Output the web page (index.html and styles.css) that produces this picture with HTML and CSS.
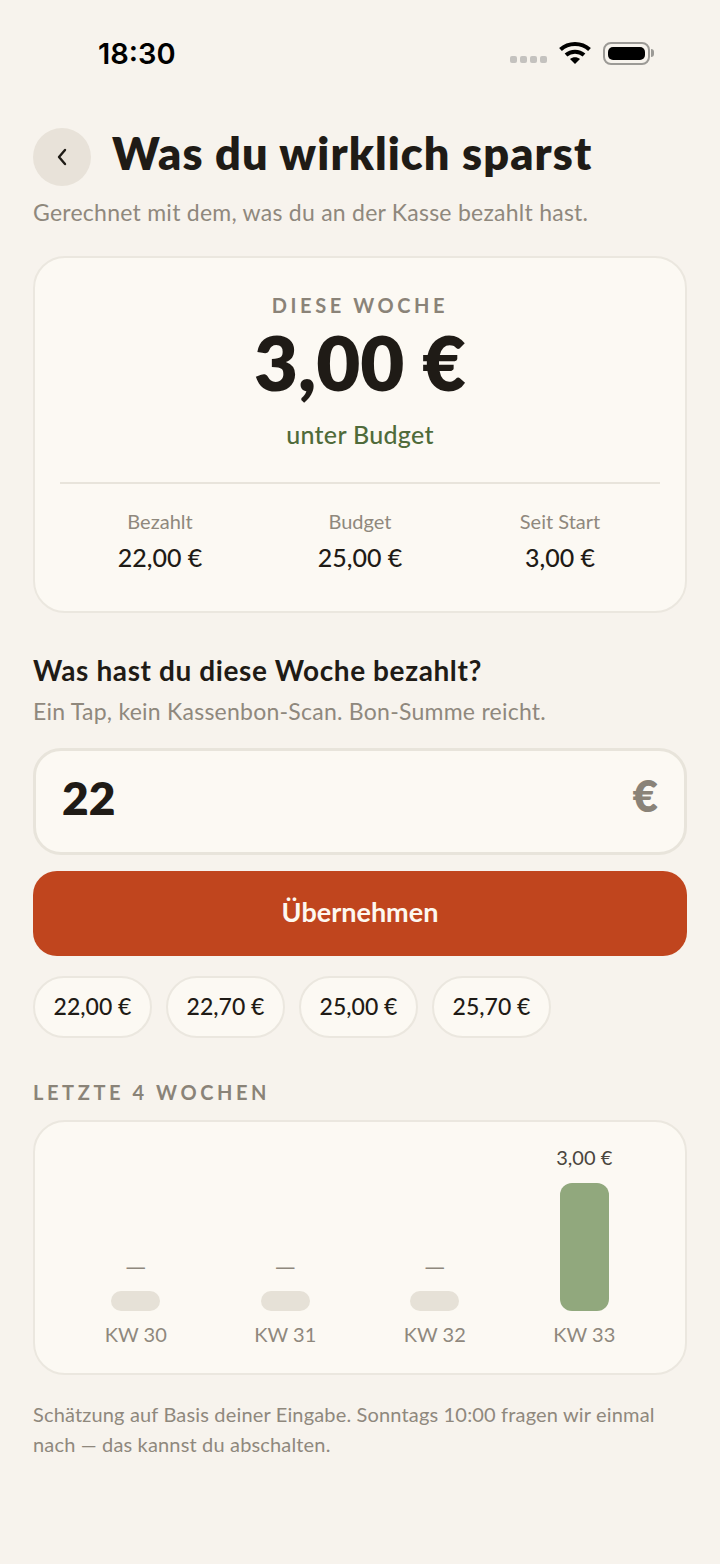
FILE: index.html
```html
<!DOCTYPE html>
<html lang="de">
<head>
    <meta charset="UTF-8">
    <meta name="viewport" content="width=device-width, initial-scale=1.0">
    <title>Was du wirklich sparst</title>
    <link rel="stylesheet" href="styles.css">
</head>
<body>
    <div class="statusbar">
        <span class="uhrzeit">18:30</span>
        <div class="status-icons">
            <div class="signal"><i></i><i></i><i></i><i></i></div>
            <svg class="wifi" width="32" height="24" viewBox="0 0 32 24">
                <path d="M1.5 8.5 C9.5 1 22.5 1 30.5 8.5" fill="none" stroke="#000" stroke-width="4"/>
                <path d="M7 14 C12 9.5 20 9.5 25 14" fill="none" stroke="#000" stroke-width="4"/>
                <path d="M11 18 C14 15.5 18 15.5 21 18 L16 23 Z" fill="#000"/>
            </svg>
            <div class="batterie"><div class="batterie-fill"></div></div>
            <div class="batterie-pol"></div>
        </div>
    </div>

    <main class="seite">
        <div class="kopf">
            <button class="zurueck">
                <svg width="12" height="20" viewBox="0 0 12 20"><path d="M9 3 L3 10 L9 17" fill="none" stroke="#1f1b16" stroke-width="2.4" stroke-linecap="round" stroke-linejoin="round"/></svg>
            </button>
            <h1>Was du wirklich sparst</h1>
        </div>
        <p class="untertitel">Gerechnet mit dem, was du an der Kasse bezahlt hast.</p>

        <section class="karte ergebnis">
            <div class="label">DIESE WOCHE</div>
            <div class="betrag">3,00 €</div>
            <div class="status-text">unter Budget</div>
            <div class="werte">
                <div class="wert"><span>Bezahlt</span><strong>22,00 €</strong></div>
                <div class="wert"><span>Budget</span><strong>25,00 €</strong></div>
                <div class="wert"><span>Seit Start</span><strong>3,00 €</strong></div>
            </div>
        </section>

        <h2>Was hast du diese Woche bezahlt?</h2>
        <p class="hinweis">Ein Tap, kein Kassenbon-Scan. Bon-Summe reicht.</p>

        <div class="eingabe">
            <span class="eingabe-wert">22</span>
            <span class="eingabe-euro">€</span>
        </div>
        <button class="uebernehmen">Übernehmen</button>

        <div class="chips">
            <button class="chip">22,00 €</button>
            <button class="chip">22,70 €</button>
            <button class="chip">25,00 €</button>
            <button class="chip">25,70 €</button>
        </div>

        <div class="label label-links">LETZTE 4 WOCHEN</div>
        <section class="karte diagramm">
            <div class="spalte">
                <span class="bar-wert leer">—</span>
                <div class="bar bar-leer"></div>
                <span class="kw">KW 30</span>
            </div>
            <div class="spalte">
                <span class="bar-wert leer">—</span>
                <div class="bar bar-leer"></div>
                <span class="kw">KW 31</span>
            </div>
            <div class="spalte">
                <span class="bar-wert leer">—</span>
                <div class="bar bar-leer"></div>
                <span class="kw">KW 32</span>
            </div>
            <div class="spalte">
                <span class="bar-wert">3,00 €</span>
                <div class="bar bar-voll"></div>
                <span class="kw">KW 33</span>
            </div>
        </section>

        <p class="fussnote">Schätzung auf Basis deiner Eingabe. Sonntags 10:00 fragen wir einmal nach — das kannst du abschalten.</p>
    </main>
</body>
</html>
```

FILE: styles.css
```css
* {
    box-sizing: border-box;
}
html, body {
    height: 100%;
}
body {
    margin: 0;
    background-color: #f7f3ed;
    color: #1f1b16;
    font-family: Lato, "Noto Sans", sans-serif;
    overflow: hidden;
}
button {
    font-family: inherit;
    border: none;
    cursor: pointer;
}

.statusbar {
    display: flex;
    justify-content: space-between;
    align-items: center;
    height: 106px;
    padding: 0 66px 0 98px;
}
.uhrzeit {
    font-family: Inter, sans-serif;
    font-size: 29px;
    font-weight: 600;
    color: #000;
}
.status-icons {
    display: flex;
    align-items: center;
}
.signal {
    display: flex;
    gap: 3px;
    margin: 12px 12px 0 0;
}
.signal i {
    width: 7px;
    height: 7px;
    border-radius: 2px;
    background-color: #c4c2bf;
}
.wifi {
    margin-right: 12px;
}
.batterie {
    width: 47px;
    height: 23px;
    padding: 3px;
    border: 2px solid #9c9a96;
    border-radius: 8px;
}
.batterie-fill {
    width: 100%;
    height: 100%;
    background-color: #000;
    border-radius: 5px;
}
.batterie-pol {
    width: 3px;
    height: 8px;
    margin-left: 1px;
    background-color: #9c9a96;
    border-radius: 0 3px 3px 0;
}

.seite {
    padding: 22px 33px 0;
}
.kopf {
    display: flex;
    align-items: center;
    gap: 21px;
}
.zurueck {
    display: flex;
    justify-content: center;
    align-items: center;
    width: 58px;
    height: 58px;
    padding: 0;
    border-radius: 50%;
    background-color: #e8e2d9;
}
h1 {
    margin: 0;
    padding-bottom: 8px;
    font-size: 45px;
    font-weight: 800;
    letter-spacing: 1.1px;
    line-height: 44px;
}
.untertitel {
    margin: 11px 0 0;
    font-size: 23px;
    letter-spacing: 0.25px;
    line-height: 30px;
    color: #8f887d;
}

.karte {
    background-color: #fcf9f3;
    border: 2px solid #ebe7df;
    border-radius: 32px;
}
.ergebnis {
    margin-top: 29px;
    height: 357px;
    padding: 34px 25px 0;
    text-align: center;
}
.label {
    font-size: 20px;
    font-weight: 700;
    letter-spacing: 3.6px;
    color: #8a8378;
    line-height: 26px;
}
.betrag {
    margin-top: 2px;
    font-size: 76px;
    font-weight: 800;
    line-height: 84px;
}
.status-text {
    margin-top: 14px;
    font-size: 25px;
    font-weight: 500;
    letter-spacing: 0.3px;
    color: #4f6b3a;
    line-height: 32px;
}
.werte {
    display: grid;
    grid-template-columns: repeat(3, 1fr);
    margin-top: 32px;
    padding-top: 24px;
    border-top: 2px solid #e8e4db;
}
.wert {
    display: flex;
    flex-direction: column;
    gap: 7px;
}
.wert span {
    font-size: 20px;
    line-height: 26px;
    color: #8f887d;
}
.wert strong {
    font-size: 25px;
    font-weight: 500;
    line-height: 32px;
}

h2 {
    margin: 39px 0 0;
    font-size: 28px;
    font-weight: 700;
    letter-spacing: 0.6px;
    line-height: 36px;
}
.hinweis {
    margin: 8px 0 0;
    font-size: 23px;
    letter-spacing: 0.25px;
    line-height: 30px;
    color: #8f887d;
}

.eingabe {
    display: flex;
    justify-content: space-between;
    align-items: center;
    height: 107px;
    margin-top: 22px;
    padding: 0 26px;
    background-color: #fcf9f3;
    border: 3px solid #e8e4db;
    border-radius: 28px;
}
.eingabe-wert {
    padding-bottom: 8px;
    font-size: 46px;
    font-weight: 800;
}
.eingabe-euro {
    padding-bottom: 14px;
    font-size: 44px;
    font-weight: 800;
    color: #8a8378;
}
.uebernehmen {
    display: block;
    width: 100%;
    height: 85px;
    margin-top: 16px;
    padding-bottom: 6px;
    border-radius: 24px;
    background-color: #c0451e;
    color: #fdf8f0;
    font-size: 27px;
    font-weight: 700;
}

.chips {
    display: flex;
    gap: 14px;
    margin-top: 20px;
}
.chip {
    width: 119px;
    height: 62px;
    padding: 0 0 2px;
    background-color: #fcf9f3;
    border: 2px solid #ebe7df;
    border-radius: 31px;
    color: #1f1b16;
    font-size: 23px;
    font-weight: 500;
}

.label-links {
    margin-top: 41px;
}
.diagramm {
    display: grid;
    grid-template-columns: repeat(4, 1fr);
    align-items: end;
    height: 255px;
    margin-top: 15px;
    padding: 0 26px 26px;
}
.spalte {
    display: flex;
    flex-direction: column;
    align-items: center;
}
.bar-wert {
    font-size: 20px;
    line-height: 26px;
    color: #4a453d;
}
.bar-wert.leer {
    font-family: "Noto Sans", sans-serif;
    color: #8f887d;
}
.bar {
    width: 49px;
    margin-top: 11px;
}
.bar-leer {
    height: 20px;
    background-color: #e6e1d7;
    border-radius: 10px;
}
.bar-voll {
    height: 128px;
    margin-top: 13px;
    background-color: #91a87d;
    border-radius: 12px;
}
.kw {
    margin-top: 10px;
    font-size: 20px;
    line-height: 26px;
    color: #8f887d;
}

.fussnote {
    margin: 24px 0 0;
    font-size: 20px;
    letter-spacing: 0.16px;
    line-height: 30px;
    color: #8f887d;
}
```
